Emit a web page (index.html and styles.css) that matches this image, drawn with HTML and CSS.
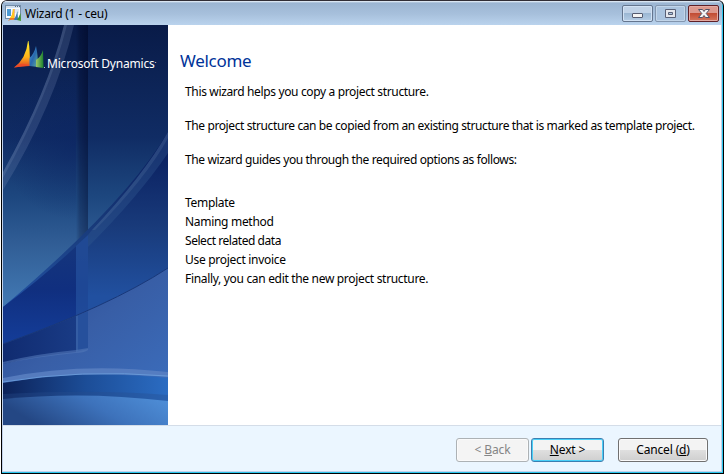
FILE: index.html
```
<!DOCTYPE html>
<html lang="en">
<head>
<meta charset="utf-8">
<title>Wizard (1 - ceu)</title>
<link rel="stylesheet" href="styles.css">
</head>
<body>
<div class="window">
  <header class="titlebar">
    <svg class="app-icon" width="17" height="17" viewBox="0 0 17 17">
      <rect x=".5" y=".5" width="15" height="13" fill="#f8fbff" stroke="#748da8"/>
      <path d="M1 2h14" stroke="#d5e2f0" stroke-width="2"/>
      <path d="M10 1.5h1M12 1.5h1M14 1.5h1" stroke="#526b86"/>
      <rect x="2" y="4" width="4" height="7" fill="#4d9bd4"/>
      <path d="M7 5h7M7 7h7" stroke="#c5d5e4"/>
      <path d="M8 4Q8 11 3 16Q6 14 9.500 15V4Z" fill="#f47b20"/>
      <path d="M8 4Q8 10 5 13L9 13V4Z" fill="#ffc91d"/>
      <path d="M12.500 6Q11 11 9 15L13 15Z" fill="#3978b5"/>
      <path d="M15.500 8Q14 12 12 15L16 16Z" fill="#43952e"/>
    </svg>
    <span class="title">Wizard (1 - ceu)</span>
    <div class="controls">
      <span class="control"><svg width="29" height="15" viewBox="0 0 29 15"><rect x="9.500" y="7.500" width="10" height="4" rx=".5" fill="#f4f4f4" stroke="#555b70"/></svg></span>
      <span class="control muted"><svg width="29" height="15" viewBox="0 0 29 15"><path fill-rule="evenodd" d="M9.500 3.500h10v8h-10zM12.500 6.500v2h4v-2z" fill="#e4e7ed" stroke="#596076"/></svg></span>
      <span class="control close"><svg width="29" height="15" viewBox="0 0 29 15"><path d="M9.500 3.500h4l1.500 2 1.500-2h4l-3.300 4 3.300 4h-4l-1.500-2-1.500 2h-4l3.300-4z" fill="#f5f5f5" stroke="#535266"/></svg></span>
    </div>
  </header>
  <main class="content">
    <aside class="banner">
      <svg class="artwork" width="165" height="400" viewBox="3 25 165 400">
        <defs>
          <linearGradient id="sky" x1="0" y1="0" x2="0" y2="1"><stop offset="0" stop-color="#091b48"/><stop offset=".28" stop-color="#102c64"/><stop offset=".43" stop-color="#1d477f"/><stop offset=".55" stop-color="#315e96"/><stop offset=".7" stop-color="#4279b4"/></linearGradient>
          <linearGradient id="fold" x1="0" y1="0" x2="1" y2="0"><stop offset="0" stop-color="#020b2d" stop-opacity="0"/><stop offset=".3" stop-color="#020b2d" stop-opacity=".4"/><stop offset="1" stop-color="#020b2d" stop-opacity=".75"/></linearGradient>
          <linearGradient id="foldFade" x1="0" y1="0" x2="0" y2="1"><stop offset="0" stop-color="#fff"/><stop offset=".5" stop-color="#bbb"/><stop offset="1" stop-color="#888"/></linearGradient>
          <mask id="foldMask"><rect x="70" y="25" width="20" height="225" fill="url(#foldFade)"/></mask>
          <radialGradient id="panel" gradientUnits="userSpaceOnUse" cx="76" cy="145" r="75"><stop offset="0" stop-color="#0a2262" stop-opacity=".5"/><stop offset="1" stop-color="#0a2262" stop-opacity="0"/></radialGradient>
          <linearGradient id="deep" gradientUnits="userSpaceOnUse" x1="0" y1="150" x2="0" y2="345"><stop offset="0" stop-color="#0a2060"/><stop offset=".4" stop-color="#193b7b"/><stop offset=".75" stop-color="#2150a0"/></linearGradient>
          <linearGradient id="deepLeft" x1="0" y1="0" x2="0" y2="1"><stop offset="0" stop-color="#16377c"/><stop offset=".5" stop-color="#102f7f"/><stop offset="1" stop-color="#143d99"/></linearGradient>
          <linearGradient id="plain" x1="0" y1="0" x2="1" y2="1"><stop offset="0" stop-color="#27458e"/><stop offset=".5" stop-color="#385ea6"/><stop offset="1" stop-color="#3b6dbc"/></linearGradient>
          <linearGradient id="shade" x1="0" y1="0" x2="1" y2="0"><stop offset="0" stop-color="#102b70"/><stop offset="1" stop-color="#193b85"/></linearGradient>
          <linearGradient id="wave" x1="0" y1="0" x2="1" y2="0"><stop offset="0" stop-color="#0c2259"/><stop offset=".5" stop-color="#1c4d97"/><stop offset="1" stop-color="#2b6cc2"/></linearGradient>
          <linearGradient id="floor" x1="0" y1="0.3" x2="1" y2="0"><stop offset="0" stop-color="#244784"/><stop offset=".5" stop-color="#3d72bb"/><stop offset="1" stop-color="#5091da"/></linearGradient>
          <linearGradient id="sail" x1="0" y1="0" x2="0" y2="1"><stop offset="0" stop-color="#fff02b"/><stop offset=".6" stop-color="#ffb31a"/><stop offset="1" stop-color="#dc3f25"/></linearGradient>
          <linearGradient id="blueSail" x1="0" y1="0" x2="1" y2="1"><stop offset="0" stop-color="#55a9d7"/><stop offset=".5" stop-color="#2868af"/><stop offset="1" stop-color="#65af99"/></linearGradient>
          <linearGradient id="greenSail" x1="0" y1="0" x2="1" y2="0"><stop offset="0" stop-color="#9dc86a"/><stop offset="1" stop-color="#19802d"/></linearGradient>
        </defs>
        <rect x="3" y="25" width="165" height="400" fill="url(#sky)"/>
        <rect x="3" y="25" width="73" height="250" fill="url(#panel)"/>
        <path d="M64 25Q48 91 3 172V190Q55 105 74 25Z" fill="#7890b8" opacity=".23"/>
        <path d="M64 25Q48 91 3 172V178Q50 93 67 25Z" fill="#91a8ca" opacity=".17"/>
        <rect x="76" y="25" width="12" height="225" fill="url(#fold)" mask="url(#foldMask)"/>
        <path d="M168 132Q126 203 3 307V344Q110 306 168 268Z" fill="url(#deep)"/>
        <path d="M88 235Q50 272 3 307V344Q50 328 88 311Z" fill="url(#deepLeft)"/>
        <path d="M168 132Q143 176 92 230L88 235V247Q139 196 168 153Z" fill="#345d91" opacity=".35"/>
        <path d="M168 132Q143 176 92 230L95 230Q147 177 168 138Z" fill="#6b86ae" opacity=".2"/>
        <path d="M76 246L88 235V315L76 320Z" fill="#2754a1" opacity=".65"/>
        <path d="M168 268Q110 306 3 344V390H168Z" fill="url(#plain)"/>
        <path d="M3 344Q45 329 76 316V352Q35 356 3 364Z" fill="url(#shade)"/>
        <path d="M76 316L88 311V349L76 352Z" fill="#26509c"/>
        <path d="M76 316V352L78 351V315Z" fill="#5175b5" opacity=".35"/>
        <path d="M3 362Q35 354 76 350L88 348V350Q84 353 76 353Q35 357 3 364Z" fill="#5277b8" opacity=".6"/>
        <path d="M168 268Q110 306 3 344" fill="none" stroke="#183779" stroke-width="1"/>
        <path d="M3 378Q80 362 168 372V377Q80 369 3 382Z" fill="#5c82c3" opacity=".8"/>
        <path d="M3 383Q80 369 168 378V403H3Z" fill="url(#wave)"/>
        <path d="M3 382Q80 369 168 376" fill="none" stroke="#6899d7" stroke-width="1"/>
        <path d="M3 394Q90 389 168 395V402H3Z" fill="#294d8b" opacity=".35"/>
        <path d="M3 399Q84 391 168 401V425H3Z" fill="url(#floor)"/>
        <g>
          <path d="M28 41Q26 59 14 67.500Q22 66 30 66Q30 49 28.500 41Z" fill="url(#sail)"/>
          <path d="M14 67.500Q20 61 30 65.500L22 66.500Z" fill="#ee4928" opacity=".8"/>
          <path d="M36 46Q34 54 29.500 58V66L38 67Q38 55 36 46Z" fill="url(#blueSail)"/>
          <path d="M43 50Q41 57 36 60V67L43.500 68Z" fill="url(#greenSail)"/>
          <rect x="44" y="67" width="1" height="1" fill="#b5c3dd"/>
        </g>
      </svg>
      <div class="brand">Microsoft Dynamics<span class="mark">·</span></div>
    </aside>
    <section class="page">
      <h1>Welcome</h1>
      <p class="intro">This wizard helps you copy a project structure.</p>
      <p class="source">The project structure can be copied from an existing structure that is marked as template project.</p>
      <p class="guide">The wizard guides you through the required options as follows:</p>
      <ul>
        <li>Template</li>
        <li>Naming method</li>
        <li class="select-step">Select related data</li>
        <li>Use project invoice</li>
        <li class="last-step">Finally, you can edit the new project structure.</li>
      </ul>
    </section>
  </main>
  <footer class="actions">
    <button class="button" disabled>&lt; <u>B</u>ack</button>
    <button class="button primary"><u>N</u>ext &gt;</button>
    <button class="button cancel">Cancel (<u>d</u>)</button>
  </footer>
</div>
</body>
</html>
```
FILE: styles.css
```
* { box-sizing: border-box; }
body { margin: 0; background: #fff; font: 12px/16px "Noto Sans", "Open Sans", sans-serif; color: #000; overflow: hidden; }
.window { width: 723px; height: 474px; margin-left: 1px; border: 1px solid #000; border-top-color: #302d35; border-radius: 6px 6px 0 0; background: #c2d2eb; box-shadow: inset -1px -1px 0 #2bc6ec; padding: 0 2px 2px 1px; display: flex; flex-direction: column; }
.titlebar { height: 24px; flex: none; display: flex; align-items: flex-start; background: linear-gradient(#eef5fc 0, #9bb5d2 2px, #a7c0dc 13px, #bad3ed); padding: 4px 3px 0 2px; margin: 0 -1px; border-radius: 5px 5px 0 0; }
.app-icon { flex: none; margin-left: 1px; }
.title { margin: 1px 0 0 3px; white-space: nowrap; letter-spacing: -.23px; }
.controls { margin-left: auto; display: flex; gap: 2px; }
.control { width: 31px; height: 17px; border: 1px solid #64758e; border-radius: 2px; box-shadow: inset 0 0 0 1px #d2e2f4; background: linear-gradient(#c0d2e7 50%, #9bb7d3 50%, #b5cde6); }
.control svg { display: block; }
.muted { border-color: #8295ae; background: #abc4df; box-shadow: inset 0 0 0 1px #c2d5e9; }
.close { border-color: #5f2027; box-shadow: inset 0 0 0 1px #e4aaa2; background: linear-gradient(#dc988d 45%, #c04a31 46%, #d5765d); }
.content { height: 400px; flex: none; display: flex; background: #fff; }
.banner { width: 165px; position: relative; flex: none; }
.artwork { display: block; }
.brand { position: absolute; left: 44px; top: 29px; font-size: 12px; line-height: 18px; color: #fff; letter-spacing: -.2px; white-space: nowrap; }
.mark { font-size: 7px; vertical-align: 3px; }
.page { padding: 25px 0 0 12px; white-space: nowrap; }
h1 { margin: 0; font-size: 17px; line-height: 22px; font-weight: 400; color: #003399; letter-spacing: -.3px; }
p { margin: 0 0 18px 5px; }
h1 + p { margin-top: 12px; }
.intro { letter-spacing: -.35px; }
.source { letter-spacing: -.39px; }
.guide { letter-spacing: -.38px; }
ul { list-style: none; margin: 25px 0 0 5px; padding: 0; line-height: 19px; letter-spacing: -.3px; }
.select-step { letter-spacing: -.45px; }
.last-step { letter-spacing: -.32px; }
.actions { flex: 1; display: flex; align-items: flex-start; justify-content: flex-end; padding: 12px 13px 0 0; background: #ebf6ff; border-top: 1px solid #d4dde8; }
.button { width: 73px; height: 24px; padding: 0 0 1px; border: 1px solid #707070; border-radius: 3px; background: linear-gradient(#f3f3f3 50%, #dfdfdf 50%, #cfcfcf); box-shadow: inset 0 0 0 1px #fafafa; font: inherit; letter-spacing: -.15px; color: #000; }
.button:disabled { color: #858585; border-color: #adb2b5; background: #f4f4f4; }
.primary { margin-left: 2px; border-color: #3c7fb1; box-shadow: inset 0 0 0 1px #49d0f8; }
.cancel { width: 90px; margin-left: 14px; }
u { text-underline-offset: 1px; text-decoration-skip-ink: none; }
```
